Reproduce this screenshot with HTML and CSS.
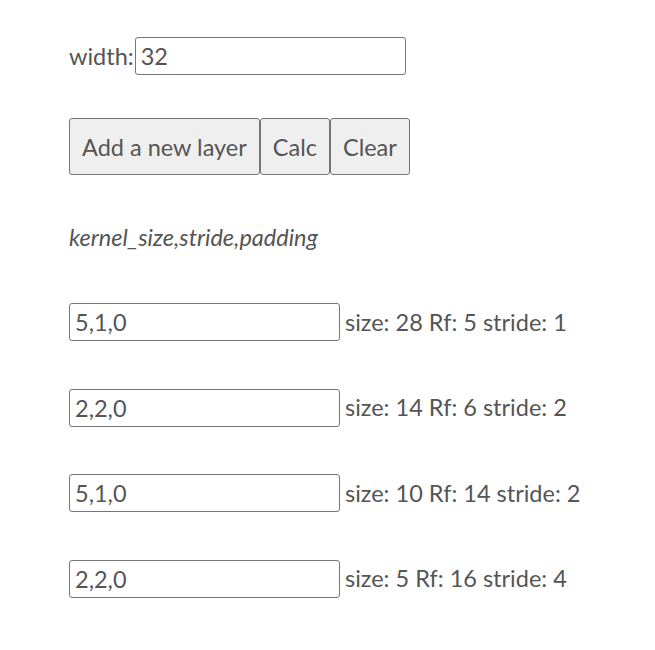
FILE: index.html
```html
<!DOCTYPE html>
<html>
<head>
<meta charset="utf-8">
<link rel="stylesheet" href="styles.css">
</head>
<body>
<div class="page">
  <div class="width-row">
    <label class="label" for="w">width:</label><input id="w" class="field" type="text" value="32">
  </div>
  <div class="buttons">
    <button class="btn">Add a new layer</button><button class="btn">Calc</button><button class="btn">Clear</button>
  </div>
  <div class="hint">kernel_size,stride,padding</div>
  <div class="layers">
    <div class="layer"><input class="field" type="text" value="5,1,0"><span class="result">size: 28 Rf: 5 stride: 1</span></div>
    <div class="layer"><input class="field" type="text" value="2,2,0"><span class="result">size: 14 Rf: 6 stride: 2</span></div>
    <div class="layer"><input class="field" type="text" value="5,1,0"><span class="result">size: 10 Rf: 14 stride: 2</span></div>
    <div class="layer"><input class="field" type="text" value="2,2,0"><span class="result">size: 5 Rf: 16 stride: 4</span></div>
  </div>
</div>
</body>
</html>
```

FILE: styles.css
```css
html, body {
  margin: 0;
  padding: 0;
  background: #ffffff;
}
body {
  font-family: Lato, "Open Sans", sans-serif;
  font-size: 23.5px;
  line-height: 33px;
  color: #555555;
}
.page {
  padding: 37px 0 0 69px;
  display: flex;
  flex-direction: column;
}
.width-row {
  display: flex;
  align-items: center;
  height: 38px;
}
.field {
  box-sizing: border-box;
  width: 271px;
  height: 38px;
  padding: 0 5px;
  margin: 0;
  border: 1px solid #767676;
  border-radius: 3px;
  font-family: Lato, "Open Sans", sans-serif;
  font-size: 23.5px;
  color: #555555;
  background: #ffffff;
}
.label {
  margin-right: 1px;
}
.buttons {
  display: flex;
  margin-top: 43px;
}
.btn {
  box-sizing: border-box;
  height: 57px;
  padding: 0 12px;
  margin: 0;
  border: 1px solid #767676;
  border-radius: 3px;
  background: #efefef;
  font-family: Lato, "Open Sans", sans-serif;
  font-size: 23.5px;
  color: #555555;
}
.hint {
  margin-top: 46px;
  font-style: italic;
}
.layers {
  margin-top: 49px;
  display: flex;
  flex-direction: column;
  gap: 47.5px;
}
.layer {
  display: flex;
  align-items: center;
  height: 38px;
}
.result {
  margin-left: 5px;
}
```
